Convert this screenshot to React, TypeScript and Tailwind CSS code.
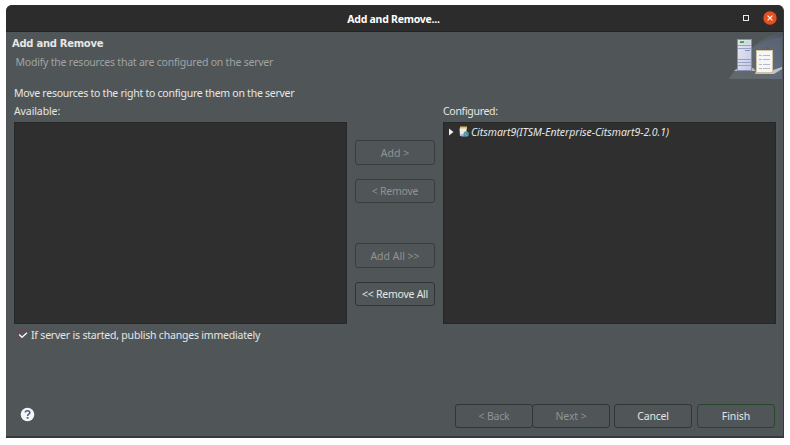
import React from "react";

type ButtonProps = { label: string; className: string; disabled?: boolean };

function DialogButton({ label, className, disabled }: ButtonProps) {
  return (
    <button
      type="button"
      disabled={disabled}
      className={`flex shrink-0 items-center justify-center whitespace-nowrap rounded-[3px] border bg-[#505658] ${disabled ? "text-[#8f9393]" : "text-[#e6e6e4]"} ${className}`}
    >
      {label}
    </button>
  );
}

function ServerBanner() {
  return (
    <svg width="53" height="47" viewBox="0 0 53 47" className="block">
      <defs>
        <linearGradient id="sky" x1="0" y1="1" x2="1" y2="0">
          <stop offset="0.1" stopColor="#70767a" stopOpacity="0.7" />
          <stop offset="0.6" stopColor="#626c76" />
          <stop offset="1" stopColor="#4c5562" />
        </linearGradient>
        <linearGradient id="tower" x1="0" y1="0" x2="1" y2="1">
          <stop offset="0" stopColor="#e6e9f5" />
          <stop offset="1" stopColor="#c3c9e2" />
        </linearGradient>
      </defs>
      <path d="M0 47L7 36L22 36L23 16Q35 5 53 0V47Z" fill="url(#sky)" opacity="0.8" />
      <path d="M26 18Q35 7 53 5V47H39Q48 28 39 14Z" fill="#61718c" opacity="0.4" />
      <path d="M5 39L9 36H24L27 39Z" fill="#b5b7c2" />
      <path d="M44 38L53 35V37L45 42H26L27 39Z" fill="#bfc2ce" />
      <rect x="8.5" y="7.5" width="14" height="31" fill="url(#tower)" stroke="#8990b5" />
      <rect x="10" y="9" width="11" height="3" fill="#c9dfd2" />
      <rect x="11" y="9" width="4" height="2" fill="#45ae4b" />
      <path d="M9 13.5H22M9 16.5H22M9 27.5H22M9 30.5H22M9 33.5H22" stroke="#9ba1c3" />
      <path d="M16 18.5H21" stroke="#8990b5" />
      <rect x="27.5" y="18.5" width="16" height="22" fill="#f4f6f8" stroke="#cfc3a1" />
      <path d="M30 23.5H41M30 27.5H41M30 32.5H41M30 36.5H41" stroke="#b2b9cb" strokeDasharray="3 1 7 1" />
    </svg>
  );
}

function ProjectIcon() {
  return (
    <svg width="11" height="12" viewBox="0 0 11 12" className="block shrink-0">
      <rect x="1" y="0.5" width="7" height="2.5" fill="#e6bb55" />
      <path d="M0.5 2.5H7.5V10H1Z" fill="#e9edf3" />
      <path d="M0.5 8.5L2.5 10.5H6V8Z" fill="#9cadc9" />
      <circle cx="7.2" cy="8" r="2.7" fill="#4b8bad" />
      <path d="M5.2 7L7.3 6L7 8.5L9.4 9.5L7 10.5Z" fill="#79ad78" />
    </svg>
  );
}

export default function App() {
  return (
    <main className="h-[445px] w-[790px] overflow-hidden bg-white pl-[6px] pt-[5px] font-['Noto_Sans','Open_Sans',sans-serif] text-[10.5px] leading-[14px] tracking-[-0.25px] text-[#e6e6e4]">
      <section className="flex h-[433px] w-[778px] flex-col overflow-hidden rounded-t-[6px] border-b-2 border-r border-b-[#35393a] border-r-[#35393a] bg-[#505658]">
        <header className="flex h-[27px] shrink-0 items-center border-b border-[#222222] bg-[#2c2c2c]">
          <div className="w-[60px]" />
          <h1 className="flex-1 pr-[2px] pt-[2px] text-center text-[10.5px] font-bold text-white">Add and Remove...</h1>
          <div className="flex w-[60px] items-center gap-[14px] pl-[20px]">
            <span className="size-[6px] shrink-0 border border-[#e9e9e9]" />
            <svg width="14" height="14" viewBox="0 0 14 14" className="shrink-0">
              <circle cx="7" cy="7" r="6.7" fill="#e6501f" />
              <path d="M4.6 4.6L9.4 9.4M9.4 4.6L4.6 9.4" stroke="#fff" strokeWidth="1.1" />
            </svg>
          </div>
        </header>

        <div className="flex h-[53px] shrink-0 justify-between pr-px">
          <div className="pl-[6px] pt-[5px]">
            <h2 className="font-['DejaVu_Sans',sans-serif] text-[10px] font-bold leading-[14px] tracking-[-0.28px]">Add and Remove</h2>
            <p className="mt-[4px] whitespace-nowrap pl-[3.5px] tracking-[-0.22px] text-[#a0a3a3]">Modify the resources that are configured on the server</p>
          </div>
          <ServerBanner />
        </div>

        <p className="mt-[1px] h-[17px] shrink-0 whitespace-nowrap pl-[8px] tracking-[-0.26px]">Move resources to the right to configure them on the server</p>

        <div className="flex h-[216px] shrink-0 pl-[8px]">
          <div className="w-[333px]">
            <div className="h-[15px] pt-[1px] tracking-[-0.1px]">Available:</div>
            <div className="mt-[4px] h-[202px] border border-[#262929] bg-[#2f2f2f]" />
          </div>
          <div className="flex w-[96px] flex-col items-center pt-[37px]">
            <DialogButton label="Add >" disabled className="h-[25px] w-[80px] border-[#383d3e] tracking-[0px]" />
            <DialogButton label="< Remove" disabled className="mt-[14px] h-[24px] w-[80px] border-[#383d3e] pb-px" />
            <DialogButton label="Add All >>" disabled className="mt-[40px] h-[25px] w-[80px] border-[#383d3e] tracking-[0px]" />
            <DialogButton label="<< Remove All" className="mt-[14px] h-[24px] w-[80px] border-[#303435] pb-px" />
          </div>
          <div className="w-[333px]">
            <div className="h-[15px] pt-[1px] tracking-[-0.3px]">Configured:</div>
            <div className="mt-[4px] h-[202px] border border-[#262929] bg-[#2f2f2f]">
              <div className="flex h-[18px] items-center pl-[5px]">
                <svg width="5" height="8" viewBox="0 0 5 8" className="shrink-0"><path d="M0 0.5L4.5 4L0 7.5Z" fill="#eeeeec" /></svg>
                <div className="ml-[5px]"><ProjectIcon /></div>
                <span className="ml-[1px] whitespace-nowrap italic tracking-[-0.04px]">Citsmart9(ITSM-Enterprise-Citsmart9-2.0.1)</span>
              </div>
            </div>
          </div>
        </div>

        <label className="mt-[9px] flex h-[14px] shrink-0 items-center pl-[12px]">
          <svg width="10" height="10" viewBox="0 0 10 10"><rect x="0.5" y="0.5" width="9" height="9" rx="1.5" fill="none" stroke="#66465f" /><path d="M1.2 4.5L4 7.2L9 2.7" fill="none" stroke="#f3f3f3" strokeWidth="1.4" /></svg>
          <span className="ml-[3px] whitespace-nowrap tracking-[-0.2px]">If server is started, publish changes immediately</span>
        </label>

        <footer className="mt-auto flex h-[32px] shrink-0 items-start justify-between pl-[14px] pr-[8px]">
          <svg width="15" height="15" viewBox="0 0 15 15" className="mt-[3px]">
            <circle cx="7.5" cy="7.5" r="6.8" fill="#f4f5f7" />
            <path d="M5.3 5.6Q5.3 3.7 7.5 3.7Q9.8 3.7 9.8 5.6Q9.8 6.7 8.5 7.4Q7.6 7.9 7.6 9" fill="none" stroke="#4d5e87" strokeWidth="1.6" />
            <rect x="6.7" y="10" width="1.8" height="1.7" fill="#4d5e87" />
          </svg>
          <div className="flex">
            <DialogButton label="< Back" disabled className="h-[24px] w-[78px] border-[#303536] pb-px tracking-[-0.2px]" />
            <DialogButton label="Next >" disabled className="-ml-px h-[24px] w-[78px] border-[#303536] pb-px tracking-[-0.1px]" />
            <DialogButton label="Cancel" className="ml-[4px] h-[24px] w-[78px] border-[#303536] pb-px tracking-[-0.2px]" />
            <DialogButton label="Finish" className="ml-[5px] h-[24px] w-[78px] border-[#26472c] pb-px tracking-[-0.1px]" />
          </div>
        </footer>
      </section>
    </main>
  );
}
